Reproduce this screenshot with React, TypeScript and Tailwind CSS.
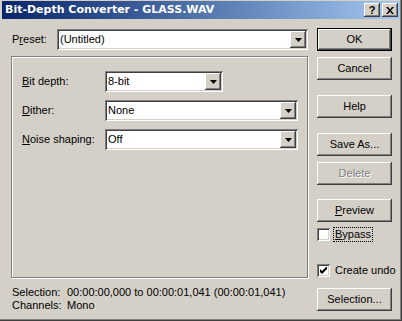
import type { ReactNode } from "react";

// Win2k-style dialog: Bit-Depth Converter

const raised =
  "bg-[#d4d0c8] shadow-[inset_-1px_-1px_#404040,inset_1px_1px_#ffffff,inset_-2px_-2px_#808080,inset_2px_2px_#d4d0c8]";
const sunken =
  "shadow-[inset_1px_1px_#808080,inset_-1px_-1px_#ffffff,inset_2px_2px_#404040,inset_-2px_-2px_#d4d0c8]";

function Combo({ value, width }: { value: string; width: string }) {
  return (
    <div className={`flex h-[21px] shrink-0 items-center bg-white p-[2px] ${sunken} ${width}`}>
      <span className="flex-1 pl-[1px] leading-none">{value}</span>
      <div className={`flex h-[17px] w-[16px] items-center justify-center ${raised}`}>
        <svg width="7" height="4" viewBox="0 0 7 4">
          <path d="M0 0h7L3.5 4z" fill="#000" />
        </svg>
      </div>
    </div>
  );
}

function Btn({ children, isDefault, disabled, className = "" }: {
  children: ReactNode;
  isDefault?: boolean;
  disabled?: boolean;
  className?: string;
}) {
  const inner = (
    <div
      className={`flex h-full w-full items-center justify-center ${raised} ${
        disabled ? "text-[#808080] [text-shadow:1px_1px_#ffffff]" : ""
      }`}
    >
      {children}
    </div>
  );
  return (
    <div className={`h-[23px] w-[75px] shrink-0 ${isDefault ? "border border-black" : ""} ${className}`}>
      {inner}
    </div>
  );
}

function Check({ checked }: { checked?: boolean }) {
  return (
    <div className={`flex h-[13px] w-[13px] shrink-0 items-center justify-center bg-white ${sunken}`}>
      {checked && (
        <svg width="7" height="7" viewBox="0 0 7 7">
          <path d="M0 2v3l2 2 5-5V-1L2 4z" fill="#000" />
        </svg>
      )}
    </div>
  );
}

export default function App() {
  return (
    <div
      className="relative flex h-[321px] w-[402px] flex-col bg-[#d4d0c8] px-[2px] pt-[1px] text-[11px] text-black shadow-[inset_-1px_-1px_#404040,inset_-2px_-2px_#808080]"
      style={{ fontFamily: '"Liberation Sans", Arial, sans-serif' }}
    >
      {/* title bar */}
      <div className="flex h-[18px] shrink-0 items-center bg-gradient-to-r from-[#0a246a] to-[#a6caf0] pl-[3px] pr-[2px]">
        <span className="flex-1 text-[11px] font-bold text-white" style={{ fontFamily: '"DejaVu Sans", sans-serif' }}>
          Bit-Depth Converter - GLASS.WAV
        </span>
        <div className={`flex h-[14px] w-[16px] items-center justify-center text-[11px] font-bold leading-none ${raised}`}>?</div>
        <div className={`ml-[2px] flex h-[14px] w-[16px] items-center justify-center ${raised}`}>
          <svg width="8" height="7" viewBox="0 0 8 7">
            <path d="M0 0h2l2 2.5L6 0h2L5 3.5 8 7H6L4 4.5 2 7H0l3-3.5z" fill="#000" />
          </svg>
        </div>
      </div>

      <div className="flex flex-1">
        {/* left column */}
        <div className="ml-[9px] flex w-[297px] flex-col">
          <div className="mt-[10px] flex items-center">
            <span className="ml-[1px] w-[45px]">
              P<u>r</u>eset:
            </span>
            <Combo value="(Untitled)" width="w-[251px]" />
          </div>

          <div className="mt-[6px] flex h-[222px] flex-col gap-[8px] border border-[#808080] pl-[10px] pt-[14px] shadow-[inset_1px_1px_#ffffff,1px_1px_#ffffff]">
            <div className="flex items-center">
              <span className="w-[83px]">
                <u>B</u>it depth:
              </span>
              <Combo value="8-bit" width="w-[118px]" />
            </div>
            <div className="flex items-center">
              <span className="w-[83px]">
                <u>D</u>ither:
              </span>
              <Combo value="None" width="w-[193px]" />
            </div>
            <div className="flex items-center">
              <span className="w-[83px]">
                <u>N</u>oise shaping:
              </span>
              <Combo value="Off" width="w-[193px]" />
            </div>
          </div>

          <div className="mt-[8px] ml-[1px] flex flex-col leading-[13px]">
            <div className="flex">
              <span className="w-[55px]">Selection:</span>
              <span>00:00:00,000 to 00:00:01,041 (00:00:01,041)</span>
            </div>
            <div className="flex">
              <span className="w-[55px]">Channels:</span>
              <span>Mono</span>
            </div>
          </div>
        </div>

        {/* right column */}
        <div className="ml-[9px] flex flex-col">
          <Btn isDefault className="mt-[9px]">OK</Btn>
          <Btn className="mt-[6px]">Cancel</Btn>
          <Btn className="mt-[15px]">Help</Btn>
          <Btn className="mt-[15px]">Save As...</Btn>
          <Btn disabled className="mt-[6px]">Delete</Btn>
          <Btn className="mt-[14px]">
            <u>P</u>review
          </Btn>
          <div className="mt-[6px] flex h-[13px] items-center">
            <Check />
            <span className="ml-[4px] px-[1px] leading-[13px] outline outline-1 outline-dotted outline-black">
              <u>B</u>ypass
            </span>
          </div>
          <div className="mt-[23px] flex h-[13px] items-center">
            <Check checked />
            <span className="ml-[5px] leading-[13px]">Create undo</span>
          </div>
          <Btn className="mt-[11px]">Selection...</Btn>
        </div>
      </div>
    </div>
  );
}
